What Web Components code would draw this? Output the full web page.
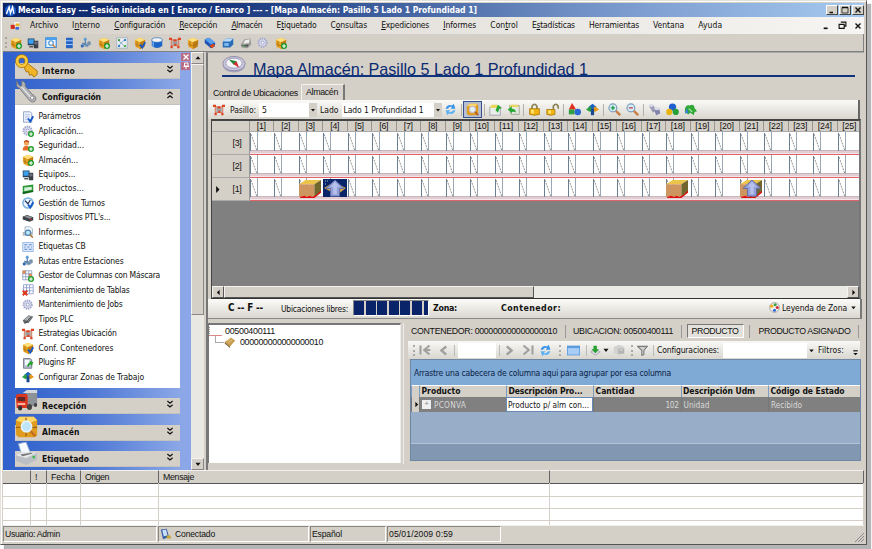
<!DOCTYPE html>
<html lang="es">
<head>
<meta charset="utf-8">
<title>Mecalux Easy</title>
<style>
html,body{margin:0;padding:0;width:872px;height:549px;overflow:hidden;background:#fff}
body{font:8.5px/12px "DejaVu Sans Condensed","DejaVu Sans",sans-serif;color:#111}
</style>
</head>
<body>
<app-window></app-window>
<script>
const box='<path d="M1 4 8 1l7 3-1 9-6 3-6-3z" fill="#e8a020"/><path d="M1 4 8 1l7 3-7 3z" fill="#ffe07a"/><path d="M8 7l7-3-1 9-6 3z" fill="#bd7c14"/><path d="M4 5v8M1 9l7 3 7-4" stroke="#a06a10" fill="none" stroke-width=".8"/>';
const plus='<circle cx="12" cy="12" r="4" fill="#1c9a28"/><path d="M9.500 12h5M12 9.500v5" stroke="#fff" stroke-width="1.500"/>';
const tick='<path d="M8 10l3 4 4-7" fill="none" stroke="#1558c8" stroke-width="2.500"/>';
const gear='<circle cx="7.500" cy="7.500" r="5.500" fill="#d8daee" stroke="#a4a8cc" stroke-width="2.500" stroke-dasharray="2 1"/><circle cx="7.500" cy="7.500" r="2" fill="#fff" stroke="#8a90bc"/>';
const glass=(m='')=>`<path d="M9 9l6 6" stroke="#c88048" stroke-width="3"/><circle cx="6" cy="6" r="4.800" fill="#d4ecfa" stroke="#7f9fb8" stroke-width="1.500"/>${m}`;
const ICONS={
app:'<circle cx="8" cy="8" r="8" fill="#1c5cc8"/><path d="M2 13 6 3l2 9 3-9 2 10" fill="none" stroke="#fff" stroke-width="2"/>',
doc:'<path d="M5 2h10v9H5z" fill="#f4f4f4" stroke="#bbb"/><path d="M1 7h6v6H1z" fill="#d42c1c"/><path d="M8 5h6v4H8z" fill="#e8b028"/><path d="M8 10h5v4H8z" fill="#3868d0"/>',
boxplus:box+plus, boxcheck:box+tick, box:box,
pc:'<path d="M1 2h9v9H1z" fill="#23405c"/><path d="M2 3h7v6H2z" fill="#3da0ee"/><path d="M9 5h6v10H9z" fill="#3a3f48"/><path d="M10 7h4M10 9h4" stroke="#99a"/><path d="M3 12h5v2H3z" fill="#555"/>',
zoomwin:'<path d="M1 1h14v13H1z" fill="#e4f2ff" stroke="#3a8ee0" stroke-width="1.500"/><path d="M1 1h14v3H1z" fill="#4aa0ee"/><circle cx="8" cy="8" r="3" fill="#fff" stroke="#4a90c8" stroke-width="1.500"/><path d="M10 10l4 4" stroke="#d08030" stroke-width="2"/>',
server:'<path d="M4 1h9v14H4z" fill="#2864c4"/><path d="M4 5h9M4 10h9" stroke="#a4ccff" stroke-width="1.500"/>',
route:'<path d="M0 11l7-4 8 3-6 4z" fill="#9fb0be"/><path d="M7 1v9M3 8l8 4" stroke="#4a7cae" stroke-width="1.500"/><circle cx="7" cy="3" r="2" fill="#5b9cd8"/><circle cx="12" cy="8" r="2.500" fill="#7690a8"/><circle cx="3" cy="12" r="2" fill="#2d68b4"/>',
mapic:'<path d="M1 1h14v14H1z" fill="#e8eef2" stroke="#9ab"/><path d="M3 4l4 4 5-5M3 12l4-4 5 5" stroke="#6b98c0" fill="none"/><circle cx="4" cy="4" r="1.500" fill="#3a9a3a"/><circle cx="12" cy="4" r="1.500" fill="#27b"/><circle cx="12" cy="12" r="1.500" fill="#3a3"/><circle cx="4" cy="12" r="1.500" fill="#27b"/>',
drum:'<path d="M1 4v8q7 5 14 0V4z" fill="#1c64c8"/><path d="M3 6v7" stroke="#6aaaf0" stroke-width="2"/><ellipse cx="8" cy="4" rx="7" ry="3" fill="#f4f4f4" stroke="#3a78c0"/>',
strat:'<path d="M3 3l5 2 5-2v9l-5-1-5 1z" fill="#c8b8ac" stroke="#d85a3c" stroke-width="1"/><path d="M5 6h6v4H5z" fill="#98a0a8"/><path d="M0 1h4v3H0zM12 1h4v3h-4zM2 12h3v3H2zM11 12h3v3h-3zM6 3h4v3H6zM7 9h3v3H7z" fill="#dc4424"/>',
db:'<path d="M1 3l6-2 8 7-1 5-5 2-8-7z" fill="#1b52b4"/><path d="M1 3l6-2 8 6-6 3z" fill="#58a0ee"/><path d="M7 12l5-3 3 2-4 4z" fill="#d8481c"/>',
cube:'<path d="M1 6l5-4h9v8l-4 4H1z" fill="#2a6cb8"/><path d="M1 6l5-4h9l-4 4z" fill="#b8dcf8"/><path d="M3 8h6v4H3z" fill="#7bb8ec"/>',
drive:'<path d="M1 10l5-7 8-1 1 8-5 5-8-1z" fill="#9a9a98"/><path d="M4 9l3-5 6-1-1 5z" fill="#ececec"/><path d="M2 11l9-1v3l-9-1z" fill="#555"/><circle cx="5" cy="12" r="1" fill="#3c3"/>',
gear:gear, gearplus:gear+plus,
sheetcheck:'<path d="M2 1h9l2 2v12H2z" fill="#e8eefc" stroke="#8292b8"/><path d="M4 5h6M4 8h6M4 11h4" stroke="#a8b4d4"/>'+tick,
user:'<circle cx="6" cy="4" r="3.500" fill="#f0a860"/><path d="M3 3q3-4 6 0" stroke="#c04818" stroke-width="2" fill="none"/><path d="M1 14q0-7 5-6 5 0 5 6z" fill="#e86a28"/>'+plus,
product:'<path d="M1 4l14-2v9L1 14z" fill="#2c9838"/><path d="M3 6l10-1v4L3 11z" fill="#d8f0d8"/><path d="M1 12l14-2v2L1 15z" fill="#14641c"/>',
clock:'<circle cx="8" cy="8" r="6.800" fill="#e8f4ff" stroke="#7ab0dc" stroke-width="2"/><path d="M4 5l4 4 3-5" stroke="#235" stroke-width="1.500" fill="none"/>'+tick,
ptl:'<path d="M1 6l6-2 8 3v4l-5 2-9-3z" fill="#3c4048"/><path d="M2 6l6-1 6 2-4 2z" fill="#8e9298"/><circle cx="12" cy="10" r="1" fill="#e33"/>',
report:'<path d="M4 1h7l3 3v7H4z" fill="#f0f4fa" stroke="#9ab"/><path d="M1 8h13v5H1z" fill="#b4b8c0"/><circle cx="8" cy="9" r="3.500" fill="#bfe4fa" stroke="#4a88b8" stroke-width="1.500"/><path d="M10.500 11.500l4 4" stroke="#b87838" stroke-width="2"/>',
tag:'<path d="M1 2h14v12H1z" fill="#dceaff" stroke="#86a8dc"/><path d="M3 5h4M9 5h4M3 8h2M7 8h3M12 8h1M3 11h4M9 11h4" stroke="#5078b8" stroke-width="1.200"/>',
cols:'<path d="M1 1h12v12H1z" fill="#fff" stroke="#8090b8"/><path d="M1 1h4v4H1zM9 5h4v4H9z" fill="#f08838"/><path d="M5 1v12M9 1v12M1 5h12M1 9h12" stroke="#8090b8"/>'+plus,
table:'<path d="M2 1h13v12H2z" fill="#fff" stroke="#8090c8"/><path d="M6 1v12M10 1v12M2 5h13M2 9h13" stroke="#8090c8"/><path d="M1 9l6 6M7 9l-6 6" stroke="#e03418" stroke-width="2.500"/>',
plc:'<path d="M1 10l8-7 6 2-6 8-6 1z" fill="#62666c"/><path d="M3 9l6-5 4 1-5 6z" fill="#aeb2b6"/><path d="M4 14l8-9" stroke="#333"/>',
plugin:'<path d="M2 2h9l2 2v11H2z" fill="#b4bed0" stroke="#667"/><path d="M4 4h6v7H4z" fill="#f4f8fc"/><path d="M7 13q0-5 4-6l-1-2 5 2-2 5-1-2q-3 0-3 3z" fill="#25a030"/>',
zones:'<path d="M8 1l5 4-2 3H5L3 5z" fill="#1c60c0"/><path d="M0 8l5-4 3 4-3 3z" fill="#28a040"/><path d="M16 8l-5-4-3 4 3 3z" fill="#e89818"/><path d="M6 7h4v8H6z" fill="#184890"/>',
refresh:'<path d="M2 7q2-6 8-4l2-2 2 6-6 0 2-2q-4-1-5 2z" fill="#3794ea"/><path d="M14 9q-2 6-8 4l-2 2-2-6h6l-2 2q4 1 5-2z" fill="#5cb0f4"/>',
boxglass:'<path d="M1 4l4-3h9l1 3v9l-3 2H3l-2-2z" fill="#e09c1c"/><path d="M1 4l4-3h9l-2 3z" fill="#ffd766"/><circle cx="8" cy="8" r="3.800" fill="#e4f2fa" stroke="#c9c0c8" stroke-width="1.500"/><path d="M11 11l4 4" stroke="#b05a20" stroke-width="2"/>',
calup:'<path d="M1 5h13v10H1z" fill="#e8eee8" stroke="#99a"/><path d="M3 2h8l3 4H1z" fill="#e8d860"/><path d="M8 9l3-7 5 4-3 1-2 5z" fill="#28a838"/>',
calback:'<path d="M3 3h12v11H5z" fill="#e4eadf" stroke="#998"/><path d="M4 2h9l2 3H3z" fill="#e8d860"/><path d="M1 8l5-4v3q5 0 5 5-2-2-5-1v2z" fill="#28a838"/>',
lock:'<path d="M5 8V4q3-5 6 0v4" fill="none" stroke="#8a8050" stroke-width="2"/><path d="M2 7h12v7q-6 2-12 0z" fill="#f0b414" stroke="#a87808"/><path d="M4 8h3v5H4z" fill="#ffe878"/>',
unlock:'<path d="M9 8V4q3-5 6 0v3" fill="none" stroke="#8a8050" stroke-width="2"/><path d="M1 8h10v6q-5 2-10 0z" fill="#f0b414" stroke="#a87808"/><path d="M3 9h3v4H3z" fill="#ffe878"/>',
shapes:'<path d="M5 0l5 8H1z" fill="#e03020"/><path d="M1 8h7v6H1z" fill="#30a040"/><circle cx="12" cy="11" r="4" fill="#2868d0"/>',
zoomin:glass('<path d="M3.500 6h5M6 3.500v5" stroke="#18983a" stroke-width="1.500"/>'),
zoomout:glass('<path d="M3.500 6h5" stroke="#c03838" stroke-width="1.500"/>'),
cyls:'<path d="M1 3l6 0 3 6-4 3z" fill="#9a9cb4"/><path d="M7 7l7 0 1 6-5 2z" fill="#8084ac"/><ellipse cx="4" cy="3" rx="3" ry="1.800" fill="#dadae8"/><ellipse cx="11" cy="7" rx="3.500" ry="1.800" fill="#dadae8"/>',
balls:'<circle cx="8" cy="5" r="4.500" fill="#2060d0"/><circle cx="4" cy="11" r="3.800" fill="#e8b414"/><circle cx="12" cy="11" r="3.800" fill="#28a038"/>',
green:'<path d="M1 10q0-8 6-7 5-3 6 3l3 4-3 1-1 4-4-3-3 2z" fill="#30a838"/><path d="M1 13l2-7 3 6z" fill="#3a80d0"/><path d="M6 7l4 4" stroke="#a8e8a8" stroke-width="1.500"/>',
compass:'<ellipse cx="14" cy="10.500" rx="13" ry="8" fill="#a6a3c0"/><ellipse cx="14" cy="8.500" rx="13" ry="8" fill="#c9c7dc" stroke="#8c89a6"/><ellipse cx="14" cy="8" rx="9.500" ry="5.600" fill="#f6f6fa" stroke="#9895b4"/><path d="M8 4l9 2-3 4z" fill="#208838"/><path d="M20 13l-7-4 4-3z" fill="#d03030"/>',
pallet:'<path d="M0 6l6-4h14l-6 4z" fill="#ecc44c"/><path d="M0 6h14v12H0z" fill="#cd9560"/><path d="M14 6l6-4v11l-6 5z" fill="#71662e"/><path d="M1 18l4-1 2 1 3-1 2 1 4-2 4-4v2l-6 5H1z" fill="#e01010"/>',
key:'<path d="M10 13l4-3 12 9v4l-4 3-2-3-3 1-1-4-3 0z" fill="#f0b428" stroke="#a87008"/><circle cx="8" cy="8" r="5.500" fill="none" stroke="#b87808" stroke-width="4.500"/><circle cx="8" cy="8" r="5.500" fill="none" stroke="#f6cc3c" stroke-width="3"/>',
wrench:'<path d="M2 1v6l4 3 10 12q5 5 8 1 2-4-4-7L12 7q1-5-4-6v5L6 7 4 5z" fill="#b2b4b6" stroke="#717478"/><circle cx="20" cy="20" r="2" fill="#fff" stroke="#888"/><path d="M8 8l10 11" stroke="#e8e8e8" stroke-width="1.500"/>',
truck:'<path d="M12 3l14-1v14l-12 3z" fill="#8c9298"/><path d="M9 4l5-3h12v3z" fill="#d4d8dc"/><path d="M1 7q0-2 3-2h10l1 3v11H2z" fill="#d83820"/><path d="M3 8h9v4H3z" fill="#5c2828"/><circle cx="6" cy="19" r="2.500" fill="#333"/><circle cx="17" cy="18" r="3" fill="#444"/><circle cx="24" cy="16" r="2" fill="#444"/><path d="M3 15h9" stroke="#ffb09a" stroke-width="2"/>',
bigbox:'<path d="M1 6l4-4h17l4 4v17l-4 2H4l-3-3z" fill="#e09c1c"/><path d="M1 6l4-4h17l4 4-13 4z" fill="#ffd766"/><path d="M13 3v21M1 14h25" stroke="#9b6410" stroke-width="1.500"/><path d="M17 17l7 7" stroke="#c47020" stroke-width="3"/><circle cx="13.500" cy="13" r="6" fill="#bfe6f8" stroke="#e4f2fa" stroke-width="2"/>',
printer:'<path d="M4 2l9-2 5 12-10 3z" fill="#f6faff" stroke="#8aa8cc"/><path d="M1 15l8-4 17 1v8l-13 6-12-5z" fill="#bbbec2"/><path d="M1 15l8-4 17 1-13 6z" fill="#e6e8ea"/><path d="M6 14l13-2 2 1-12 3z" fill="#777"/><circle cx="22" cy="17" r="1.500" fill="#3b4"/>',
up:'<path d="M10 0L20 10h-5v9H5v-9H0z" fill="#929fd8" stroke="#5c68a4"/><path d="M10 2l5 6h-3v9H8V8H5z" fill="#b6c0ec"/>',
tree:'<path d="M1 8l8-6 6 4-7 8z" fill="#c89c50"/><path d="M1 8l7 6v2L1 10z" fill="#7a5c28"/><path d="M4 7l5-4M6 9l5-4" stroke="#f4dc9c"/>',
grid:'<path d="M0 2h16v12H0z" fill="#5a9ae0"/><path d="M1 5h14v8H1z" fill="#a8ccf4"/>',
export:'<path d="M1 10l7-4 7 4-7 5z" fill="#d8d8dc" stroke="#99a"/><path d="M5 1h5v5h3l-5 6-6-6h3z" fill="#28a030"/>',
ghost:'<path d="M1 4l7-3 7 3v8l-7 3-7-3z" fill="#d2d2d0"/><path d="M7 6h8v7H7z" fill="#b4b4b2"/><path d="M9 8h4" stroke="#eee"/>',
funnel:'<path d="M1 2h14l-5 6v6l-3 1V8z" fill="#cfcfcf" stroke="#777" stroke-width="1.500"/>',
palette:'<circle cx="8" cy="8" r="7" fill="#f4f4f4" stroke="#888"/><circle cx="4" cy="6" r="2.500" fill="#e8b020"/><circle cx="9" cy="4" r="2.200" fill="#38a040"/><circle cx="12" cy="8" r="2.200" fill="#d03030"/><circle cx="8" cy="12" r="2.200" fill="#3068d0"/>',
conn:'<path d="M1 2l8-1 3 11-8 3z" fill="#3a5ea4"/><path d="M3 3l5-1 2 8-5 1z" fill="#c8e0fa"/><path d="M9 10h5l1 4h-6z" fill="#c8a838"/>',
first:'<path d="M2 2v12M14 2L7 8l7 6M7 8h8" stroke="#a0a0a0" stroke-width="2.800" fill="none"/>',
prev:'<path d="M12 2L5 8l7 6" stroke="#a0a0a0" stroke-width="3.500" fill="none"/>',
next:'<path d="M4 2l7 6-7 6" stroke="#a0a0a0" stroke-width="3.500" fill="none"/>',
last:'<path d="M14 2v12M2 2l7 6-7 6" stroke="#a0a0a0" stroke-width="2.800" fill="none"/>',
cdn:'<path d="M4.500 4L8 7l3.500-3M4.500 9L8 12l3.500-3" stroke="#111" stroke-width="1.600" fill="none"/>',
cup:'<path d="M4.500 7L8 4l3.500 3M4.500 12L8 9l3.500 3" stroke="#111" stroke-width="1.600" fill="none"/>',
close:'<path d="M3 3l10 10M13 3L3 13" stroke="currentColor" stroke-width="2.800"/>',
max:'<path d="M2 3h12v11H2z" fill="none" stroke="#111" stroke-width="1.500"/><path d="M2 3h12" stroke="#111" stroke-width="3"/>',
min:'<path d="M3 13h7" stroke="#111" stroke-width="3"/>',
rest:'<path d="M5 2h9v7h-3M2 6h9v7H2z" fill="none" stroke="#111" stroke-width="2"/>',
pin:'<path d="M5 2h7v6H5zM3 9h11M8 9v5" fill="none" stroke="#fff" stroke-width="2"/>',
dd:'<path d="M4 6h8l-4 5z" fill="#111"/>', du:'<path d="M4 10h8L8 5z" fill="#111"/>',
dl:'<path d="M10 3v10L5 8z" fill="#111"/>', dr:'<path d="M6 3v10l5-5z" fill="#111"/>',
over:'<path d="M4 5h8" stroke="#111" stroke-width="2"/><path d="M4 9h8l-4 4z" fill="#111"/>'
};
const BIG={compass:'0 0 28 19',pallet:'0 0 20 20',up:'0 0 20 20',key:'0 0 27 27',wrench:'0 0 27 27',truck:'0 0 27 24',bigbox:'0 0 27 27',printer:'0 0 27 27'};
const ic=(n,s=12,h=s)=>`<ui-icon name="${n}" w="${s}" h="${h}"></ui-icon>`;
const tx=(t,w,c='')=>`<fit-text w="${w}" class="${c}">${t}</fit-text>`;
const part=(name,css,html)=>customElements.define(name,class extends HTMLElement{
 connectedCallback(){ if(this.shadowRoot)return;
  this.attachShadow({mode:'open'}).innerHTML=`<style>:host{display:block;box-sizing:border-box}*{box-sizing:border-box}${css}</style>`+(typeof html==='function'?html(this):html);}
});

part('app-window',`:host{display:flex;flex-direction:column;width:867px;height:545px;background:#d4d0c8;border:1px solid #e4e1dc;border-right-color:#555;border-bottom-color:#555;padding:2px 2px 0 2px;box-shadow:inset 1px 1px #fff,4px 4px 1px #b4b4b4}
main{display:flex;height:418px}
`,`<title-bar></title-bar><menu-bar></menu-bar><main-tools></main-tools><main><side-panel></side-panel><work-area></work-area></main><message-log></message-log><status-bar></status-bar>`);

part('title-bar',`:host{display:flex;align-items:center;height:14px;flex:none;background:linear-gradient(90deg,#0a246a 0%,#16357c 25%,#7797cb 70%,#a6caf0);color:#fff;font-weight:bold;padding-left:2px;padding-right:0}
.t{margin:-1px 0 0 2px}.b{display:flex;margin-left:auto;gap:1px;color:#111}.b span{width:12px;height:10px;background:#d4d0c8;border:1px solid #fff;border-right-color:#444;border-bottom-color:#444;display:flex;align-items:center;justify-content:center}`,
`${ic('app',11)}${tx('Mecalux Easy --- Sesión iniciada en [ Enarco / Enarco ] --- - [Mapa Almacén: Pasillo 5 Lado 1 Profundidad 1]',459,'t')}<div class="b"><span>${ic('min',8)}</span><span>${ic('max',8)}</span><span>${ic('close',8)}</span></div>`);

const menus=[['Archivo',28],['I<u>n</u>terno',28],['<u>C</u>onfiguración',51],['<u>R</u>ecepción',38],['<u>A</u>lmacén',31],['E<u>t</u>iquetado',40],['C<u>o</u>nsultas',36.5],['<u>E</u>xpediciones',48],['<u>I</u>nformes',33],['Con<u>t</u>rol',27.5],['E<u>s</u>tadísticas',43],['Herramientas',50],['Ventana',31],['Ayuda',24]];
part('menu-bar',`:host{display:flex;align-items:center;height:17px;flex:none;background:linear-gradient(90deg,#d6d2ca,#f6f5f3);padding-left:7px}
nav{display:flex;gap:14.100px;margin:-1px 0 0 9px}.b{display:flex;gap:7px;margin-left:auto;margin-right:2px}`,
`${ic('doc',11)}<nav>${menus.map(m=>tx(...m)).join('')}</nav><div class="b">${ic('min',9)}${ic('rest',9)}${ic('close',8)}</div>`);

part('main-tools',`:host{display:flex;align-items:center;height:18px;flex:none;border-bottom:1px solid #808080;border-right:1px solid #808080;padding-left:2px;gap:5.700px}
i{width:0;height:11px;border-left:2px dotted #aaa69e;margin-right:-3px}`,
'<i></i>'+['boxplus','pc','zoomwin','server','route','boxplus','mapic','boxcheck','drum','strat','box','db','cube','drive','gear','boxplus'].map(n=>ic(n)).join(''));

part('nav-group',`:host{display:block;width:165px}
header{height:16px;background:#d4d0c8;display:flex;align-items:center;font-weight:bold;font-size:8.500px;border-bottom:1px solid #c4c2bc}
.g{margin-top:-9px;width:27px;height:25px}.c{margin-left:auto;margin-right:4px}
.l{background:#fff;padding:4px 0 3.500px}.l:not(.on){display:none}`,
e=>`<header><div class="g">${ic(e.getAttribute('icon'),23,24)}</div>${tx(e.getAttribute('label'),e.getAttribute('w'))}<div class="c">${ic(e.hasAttribute('open')?'cup':'cdn',12)}</div></header><div class="l ${e.hasAttribute('open')?'on':''}"><slot></slot></div>`);
part('nav-item',`:host{display:flex;align-items:center;height:14.470px;padding-left:7px;gap:4.500px}fit-text{margin-top:-1px}`,
e=>ic(e.getAttribute('icon'),12)+tx(e.getAttribute('label'),e.getAttribute('w')));

const items=[['sheetcheck','Parámetros',42],['gearplus','Aplicación...',44.5],['user','Seguridad...',45.5],['boxplus','Almacén...',39.5],['pc','Equipos...',37],['product','Productos...',45.5],['clock','Gestión de Turnos',66.5],['ptl',"Dispositivos PTL's...",72],['report','Informes...',41.5],['tag','Etiquetas CB',47],['route','Rutas entre Estaciones',85],['cols','Gestor de Columnas con Máscara',121.5],['table','Mantenimiento de Tablas',91],['gear','Mantenimiento de Jobs',84],['plc','Tipos PLC',35],['strat','Estrategias Ubicación',78],['boxcheck','Conf. Contenedores',75],['plugin','Plugins RF',37.5],['zones','Configurar Zonas de Trabajo',105.5]];
part('side-panel',`:host{display:flex;width:201px;height:418px;flex:none}
.n{width:188px;background:linear-gradient(90deg,#2f60cc,#4672d2 40%,#8ba7e7 94%);padding:11px 0 0 12px;position:relative;overflow:hidden}
nav-group{margin-bottom:10.400px}nav-group[open]{margin-bottom:10.500px}
.x{position:absolute;right:1px;top:1px;display:grid;gap:1px;color:#fff}.x span{width:9px;height:8px;background:#b86c86;display:flex;align-items:center;justify-content:center}
.s{width:13px;background:#eae8e3;display:flex;flex-direction:column}.s b{border:1px solid #f4f3f0;border-right-color:#888;border-bottom-color:#888;background:#d4d0c8;height:12px;display:flex;justify-content:center;align-items:center}.s .th{height:251px}.s b:last-child{margin-top:auto}`,
`<div class="n"><nav-group icon="key" label="Interno" w="33"></nav-group><nav-group open icon="wrench" label="Configuración" w="59">${items.map(([i,l,w])=>`<nav-item icon="${i}" label="${l}" w="${w}"></nav-item>`).join('')}</nav-group><nav-group icon="truck" label="Recepción" w="44.5"></nav-group><nav-group icon="bigbox" label="Almacén" w="37.5"></nav-group><nav-group icon="printer" label="Etiquetado" w="47"></nav-group><div class="x"><span>${ic('close',8)}</span><span>${ic('pin',8)}</span></div></div>
<div class="s"><b>${ic('du',10)}</b><b class="th"></b><b>${ic('dd',10)}</b></div>`);

part('work-area',`:host{margin-left:2px;width:658px;height:418px;border-left:2px solid #777;border-top:1px solid #aaa}
.h{display:flex;align-items:flex-start;height:24px;margin-left:14px;width:633px;border-bottom:2px solid #0f347c;padding-top:2px}
h1{margin:4px 0 0 7px;font:16.200px/20px "Liberation Sans",sans-serif;color:#0a2a72}
.h ui-icon{margin-top:1px}
.tabs{display:flex;align-items:flex-end;height:23px;padding-left:5px;font:8.900px/12px "Liberation Sans",sans-serif}
.tabs div{height:13px;padding-top:0}.tabs .on{margin-left:3px;padding:1px 5px 0 4px;height:16px;border:1px solid #f4f2ee;border-right:2px solid #777;border-bottom:0;background:#d8d4cd;border-radius:2px 1px 0 0}`,
`<div class="h">${ic('compass',24,17)}<h1>${tx('Mapa Almacén: Pasillo 5 Lado 1 Profundidad 1',335)}</h1></div>
<div class="tabs"><div>${tx('Control de Ubicaciones',85)}</div><div class="on">${tx('Almacén',32)}</div></div>
<map-tools></map-tools><warehouse-map></warehouse-map><zone-bar></zone-bar><detail-area></detail-area>`);

const g=n=>`<span class="i">${ic(n,13)}</span>`,sp='<em></em>';
part('map-tools',`:host{display:flex;align-items:center;height:19px;width:652px;background:linear-gradient(#fafaf8,#d9d6ce);padding-left:5px;border-right:2px solid #666}
.f{background:#fff;height:14px;display:flex;align-items:center;padding-left:3px;justify-content:space-between}.f ui-icon{background:#d4d0c8;height:14px}
.i{width:18px;flex:none;display:flex;justify-content:center}em{width:1px;height:12px;flex:none;background:#b4b0a8;margin:0 1.400px}.sel{width:19px;height:17px;border:1px solid #35508c;background:#b8bfd4;display:flex;align-items:center;justify-content:center}`,
`${ic('strat',12)}<span style="width:5px"></span>${tx('Pasillo:',26)}<span class="f" style="width:58px;margin-left:3px">${tx('5',5)}${ic('dd',8)}</span><span style="width:3px"></span>${tx('Lado',18.5)}<span class="f" style="width:100px;margin-left:3px;padding-left:2px">${tx('Lado 1 Profundidad 1',80)}${ic('dd',8)}</span>${g('refresh')}${sp}<span class="sel">${ic('boxglass',13)}</span>${sp}${g('calup')}${g('calback')}${sp}${g('lock')}${g('unlock')}${sp}${g('shapes')}${g('zones')}${sp}${g('zoomin')}${g('zoomout')}${sp}${g('cyls')}${g('balls')}${g('green')}`);

const cell=k=>`<div class="c ${k||''}"><svg width="24.500" height="23" viewBox="0 0 24.500 23"><path d="M0 18.500h25v3H0z" fill="#e2cdd2"/><path d="M0 18.500h25" stroke="#b9a9ae" stroke-width=".8"/><path d="M0 22.500h25" stroke="#e06466"/><path d="M.5 1v18" stroke="#6a7f92"/><path d="M1 2l6 17" stroke="#777" stroke-dasharray="2 1" stroke-width=".8"/><path d="M7.500 0v19" stroke="#9aa7b2"/>${k=='sel'?'<path d="M0 1h24v18H0z" fill="#0a246a"/><path d="M1 10l10-6 12 6-9 7z" fill="#c9a04c"/><path d="M2 3h3M2 6h1" stroke="#9bb" stroke-dasharray="1 1"/>':''}</svg>${k&&k!='sel'?`<div class="o">${ic('pallet',22,21)}</div>`:''}${k=='sel'||k=='arr'?`<div class="a">${ic('up',18,17)}</div>`:''}</div>`;
const row=(l,m={})=>`<div class="rh">${l=='[1]'?ic('dr',11):''}<span>${tx(l,9)}</span></div>`+Array.from({length:25},(_,i)=>cell(m[i+1])).join('');
part('warehouse-map',`:host{width:650px;height:180px;margin-left:3px;border:2px solid #444;border-left-width:1px;border-right-color:#777;border-bottom:1px solid #333;background:#808080;display:flex;flex-direction:column;overflow:hidden;font:9px/11px "Liberation Sans",sans-serif}
.g{display:grid;grid-template-columns:37.500px repeat(25,24.500px);grid-template-rows:11px repeat(3,23px);width:650px;background:#fff}
.ch,.rh{background:#d4d0c8;display:flex;align-items:center;justify-content:center;border-right:1px solid #999;border-bottom:1px solid #aaa}.ch{border-right:1px solid #9a9790;font-size:8.800px}.rh span{margin-left:auto;margin-right:7px}
.c{position:relative;overflow:hidden}.c svg{display:block}.o{position:absolute;left:0;top:0}.a{position:absolute;left:3px;top:2px}
.s{height:12px;margin-top:auto;display:flex;background:#eceae5}.s b{background:#d4d0c8;border:1px solid #f4f3f0;border-right-color:#555;border-bottom-color:#555;width:12px;display:flex;align-items:center;justify-content:center}.s .th{width:310px}.s b:last-child{margin-left:auto;margin-right:0}`,
`<div class="g"><div class="ch"></div>${Array.from({length:25},(_,i)=>`<div class="ch">${tx(`[${i+1}]`,i<9?9:14)}</div>`).join('')}${row('[3]')}${row('[2]')}${row('[1]',{3:'box',4:'sel',18:'box',21:'arr'})}</div><div class="s"><b>${ic('dl',9)}</b><b class="th"></b><b>${ic('dr',9)}</b></div>`);

part('zone-bar',`:host{display:flex;align-items:center;height:20px;width:654px;background:linear-gradient(#fbfbf9,#dad7cf);padding-left:20px;border-bottom:1px solid #888;border-right:2px solid #777}
b{font-size:8.800px}b:first-of-type{font-size:9.800px}b,.z{margin-top:-2px}.p{height:16px;width:76px;border:1px solid #888;border-right-color:#fff;border-bottom-color:#fff;margin:-1px 4px 0 5px;background:repeating-linear-gradient(90deg,#0a246a 0 10px,#d4d0c8 10px 11.600px)}
.z{margin-left:auto;margin-right:2px;display:flex;align-items:center;gap:2px}`,
`<b>${tx('C -- F --',35)}</b><span style="width:18px"></span>${tx('Ubicaciones libres:',67)}<div class="p"></div><b>${tx('Zona:',24)}</b><span style="width:44px"></span><b>${tx('Contenedor:',60)}</b><div class="z">${ic('palette',11)}${tx('Leyenda de Zona',65)}${ic('dd',9)}</div>`);

part('detail-area',`:host{display:flex;width:656px;height:145px;padding-top:4px;gap:2px}
.t{width:193px;height:140px;background:#fff;border-top:2px solid #777;border-left:1px solid #777;border-right:1px solid #eee;font:8.900px/12px "Liberation Sans",sans-serif}
.t div{display:flex;align-items:center;height:11.500px}.r i{width:13px;height:9px;border-bottom:1px solid #d88;border-left:1px dotted #999;margin:2px 3px 0 0}.k i{width:9px;height:7px;border-left:1px solid #aaa;border-bottom:1px solid #aaa;margin:-6px 0 0 6px}.k fit-text{margin-left:4px}`,
`<div class="t"><div class="r"><i></i>${tx('00500400111',50)}</div><div class="k"><i></i>${ic('tree',12)}${tx('000000000000000010',83)}</div></div><product-panel></product-panel>`);

part('product-panel',`:host{width:460px;height:141px;border-left:1px solid #eee;padding-left:4px}
.tabs{display:flex;align-items:center;height:16px;font:8.800px/12px "Liberation Sans",sans-serif;padding-left:3px}.tabs em{width:1px;height:13px;flex:none;background:#999;margin:0 7.500px}.tabs .on{border:1px solid #777;border-right-color:#fff;border-bottom-color:#fff;background:#e4e1dc;height:14px;padding:0 4px;margin:0 -4px 0 -5px;flex:none}
.tb{display:flex;align-items:center;height:18px;margin-top:2px;background:linear-gradient(#f8f8f6,#d9d6cf);padding-left:3px;width:452px}
.tb em{width:1px;height:11px;background:#bbb;margin:0 3px;flex:none}.tb i{height:11px;border-left:2px dotted #aaa;margin:0 4px 0 2px}.tb span{flex:none}.w{background:#fff;height:15px}
.ig{margin-left:2px;width:451px;height:102px;border:1px solid #6d87a4;background:#98aec8;display:flex;flex-direction:column}
.gb{height:25px;background:#80aad6;padding:7px 0 0 3px;color:#0a2244}.row{display:grid;grid-template-columns:8px 87px 87px 87.500px 87.500px 1fr}
.hd{height:12px;background:#d4d0c8;font-weight:bold}.hd div{border-left:1px solid #7b9cc0;padding-left:1.500px;height:12px;line-height:10px;border-top:1px solid #fff}
.hd div,.dt div{white-space:nowrap}.dt{height:15px;background:#808080;color:#d8d8d8;font-size:8.200px}.dt div{border-left:1px solid #777;padding-left:2px;height:15px;display:flex;align-items:center}.dt .a{background:#d4d0c8;padding:0;overflow:hidden}.dt .w2{background:#fff;color:#111;border:1px solid #6689b8;padding-left:1px}.dt .n{justify-content:flex-end;padding-right:2px}.pl{width:9px;height:9px;background:#eee;color:#888;margin-right:3px;font:8px/8px "Liberation Sans";text-align:center}
.ft{height:17px;margin-top:auto;background:#8298b2;border-top:1px solid #b4c4d6}`,
`<div class="tabs">${tx('CONTENEDOR: 000000000000000010',146)}<em></em>${tx('UBICACION: 00500400111',100)}<em style="margin-right:10px"></em><span class="on">${tx('PRODUCTO',47)}</span><em style="margin-left:9px;margin-right:9px"></em>${tx('PRODUCTO ASIGNADO',92)}<em></em></div>
<div class="tb"><i></i>${ic('first',12)}<span style="width:7px"></span>${ic('prev',11)}<span style="width:2px"></span><em></em><span class="w" style="width:38px"></span><em></em><span style="width:1px"></span>${ic('next',11)}<span style="width:7px"></span>${ic('last',12)}<span style="width:5px"></span>${ic('refresh',13)}<span style="width:5px"></span><i></i><span style="width:2px"></span>${ic('grid',13)}<span style="width:3px"></span><em></em>${ic('export',11)}${ic('dd',10)}<span style="width:2px"></span>${ic('ghost',12)}<span style="width:4px"></span><i></i>${ic('funnel',11)}<span style="width:2px"></span><em></em>${tx('Configuraciones:',62)}<span class="w" style="width:84px;margin-left:4px"></span>${ic('dd',9)}<span style="width:2px"></span>${tx('Filtros:',26)}<span style="margin:8px 0 0 auto">${ic('over',9)}</span></div>
<div class="ig"><div class="gb">${tx('Arrastre una cabecera de columna aqui para agrupar por esa columna',257)}</div>
<div class="row hd"><div></div><div>${tx('Producto',39)}</div><div>${tx('Descripción Pro...',74)}</div><div>${tx('Cantidad',39)}</div><div>${tx('Descripción Udm',72)}</div><div>${tx('Código de Estado',74)}</div></div>
<div class="row dt"><div class="a">${ic('dr',9)}</div><div><span class="pl">+</span>${tx('PCONVA',32)}</div><div class="w2">${tx('Producto p/ alm con...',81)}</div><div class="n">${tx('102',13)}</div><div>${tx('Unidad',26)}</div><div>${tx('Recibido',31)}</div></div><div class="ft"></div></div>`);

part('message-log',`:host{height:55px;flex:none;background:#fff;overflow:hidden;font:8.800px/12px "Liberation Sans",sans-serif}
.r{display:grid;grid-template-columns:28px 16px 34px 78px 391px 1fr;height:12px}.r div{border-right:1px solid #d4d0c8;border-bottom:1px solid #d4d0c8}
.hd{height:13px;background:#d4d0c8}.hd div{border-right:1px solid #666;border-bottom:1px solid #555;border-top:1px solid #f4f2ee;padding-left:4px}`,
`<div class="r hd"><div></div><div>!</div><div>${tx('Fecha',24)}</div><div>${tx('Origen',24)}</div><div>${tx('Mensaje',31)}</div><div></div></div>`+('<div class="r" style="height:14px">'+'<div></div>'.repeat(6)+'</div>')+('<div class="r">'+'<div></div>'.repeat(6)+'</div>').repeat(3));

part('status-bar',`:host{height:17px;flex:none;display:flex;gap:1px;font:8.600px/12px "Liberation Sans",sans-serif;border-top:1px solid #eee}
div{border:1px solid #8a8780;border-right-color:#fff;border-bottom-color:#fff;display:flex;align-items:center;padding-left:1px;gap:3px}
svg{margin-left:auto;align-self:flex-end}`,
`<div style="width:154px">${tx('Usuario: Admin',55)}</div><div style="width:151px">${ic('conn',12)}${tx('Conectado',40)}</div><div style="width:76px">${tx('Español',30)}</div><div style="width:114px">${tx('05/01/2009 0:59',64)}</div><svg width="10" height="10"><path d="M1 10L10 1M4 10l6-6M7 10l3-3" stroke="#888"/></svg>`);

customElements.define('ui-icon',class extends HTMLElement{
 connectedCallback(){ if(this.shadowRoot)return; const n=this.getAttribute('name'),w=this.getAttribute('w'),h=this.getAttribute('h');
  this.attachShadow({mode:'open'}).innerHTML=`<style>:host{display:inline-flex;align-items:center;flex:none}svg{display:block}</style><svg width="${w}" height="${h}" viewBox="${BIG[n]||'0 0 16 16'}" preserveAspectRatio="none">${ICONS[n]}</svg>`;}
});
/* Text run whose tracking is tuned so that it fills a given width. */
customElements.define('fit-text',class extends HTMLElement{
 connectedCallback(){ if(this.shadowRoot)return;
  this.attachShadow({mode:'open'}).innerHTML='<style>:host{display:inline-block;white-space:nowrap;flex:none}span{display:inline-block}::slotted(u){text-underline-offset:1px;text-decoration-thickness:.7px}</style><span><slot></slot></span>';
  const s=this.shadowRoot.querySelector('span'),w=+this.getAttribute('w'),n=s.getBoundingClientRect().width;
  this.style.letterSpacing=(w-n)/this.textContent.length+'px';}
});
</script>
</body>
</html>
